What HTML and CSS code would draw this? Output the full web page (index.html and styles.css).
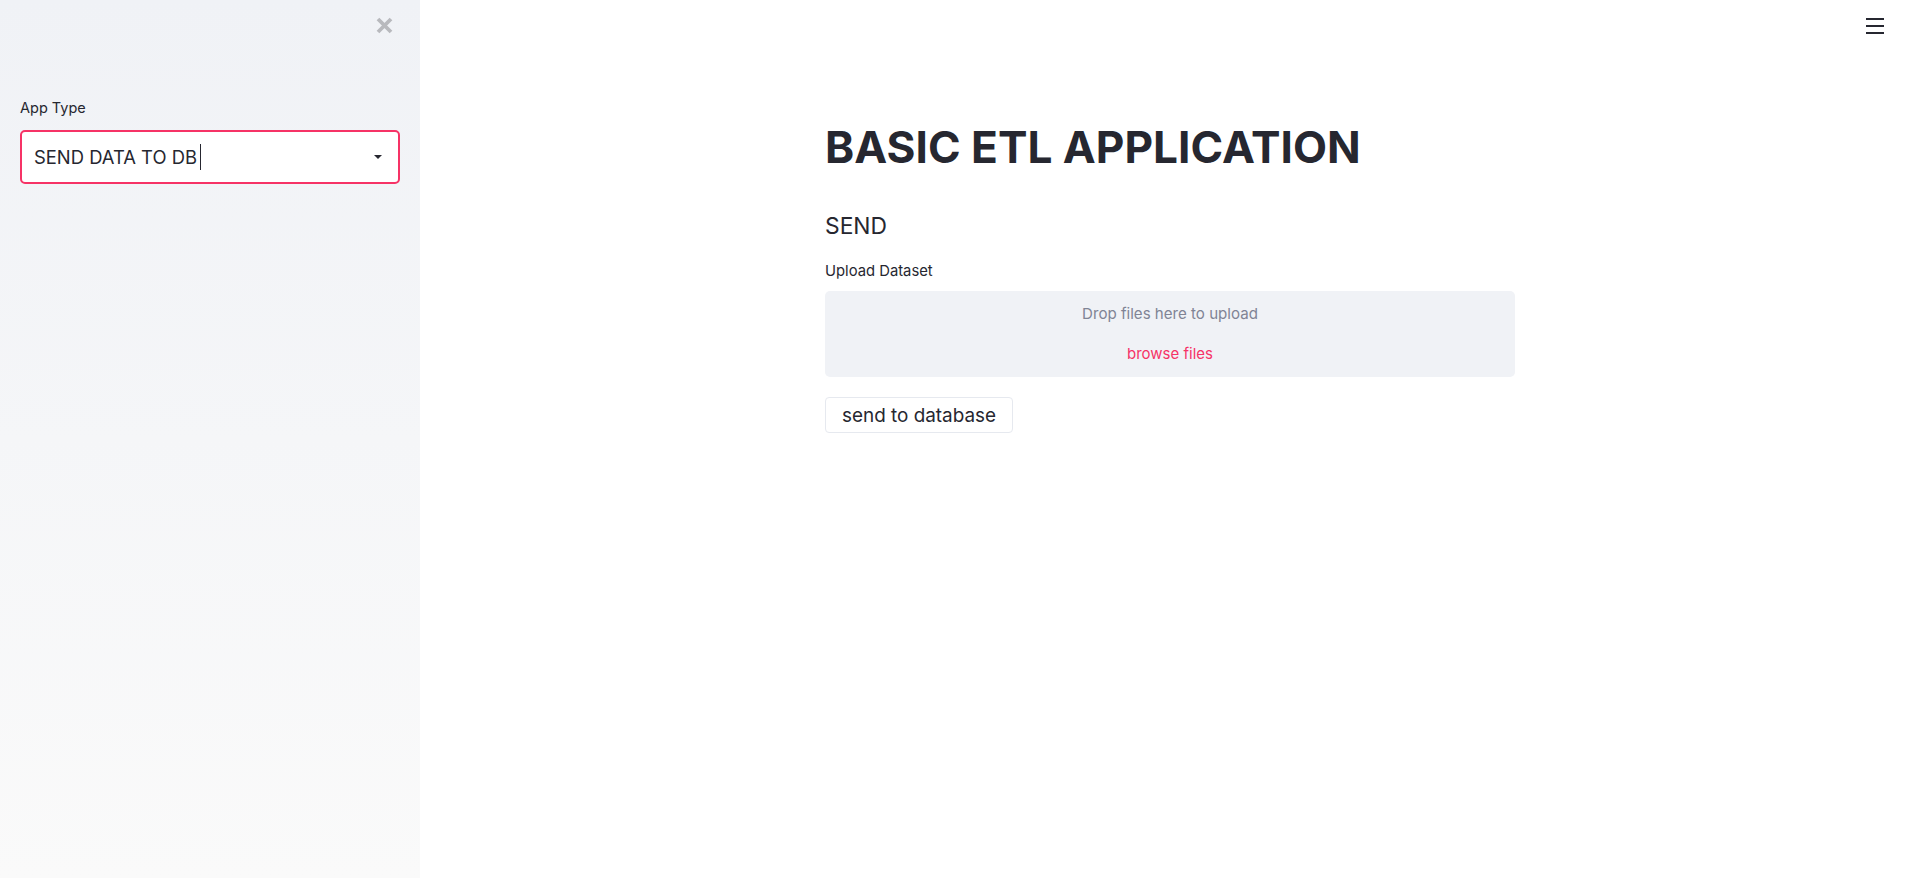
FILE: index.html
```html
<!DOCTYPE html>
<html lang="en">
<head>
<meta charset="utf-8">
<title>BASIC ETL APPLICATION</title>
<link rel="stylesheet" href="styles.css">
</head>
<body>
<div class="app">
  <aside class="sidebar">
    <div class="sidebar-top">
      <button class="close-btn" aria-label="Close sidebar">
        <svg width="17" height="17" viewBox="0 0 17 17"><path d="M2 2L15 15M15 2L2 15" stroke="currentColor" stroke-width="3.8" stroke-linecap="butt"/></svg>
      </button>
    </div>
    <label class="field-label">App Type</label>
    <div class="select">
      <span class="select-value">SEND DATA TO DB</span><span class="caret-cursor"></span>
      <svg class="select-arrow" width="8" height="4" viewBox="0 0 8 4"><path d="M0 0H8L4 4Z" fill="#262730"/></svg>
    </div>
  </aside>
  <main class="main">
    <button class="menu-btn" aria-label="Menu">
      <span></span><span></span><span></span>
    </button>
    <div class="block">
      <h1 class="title">BASIC ETL APPLICATION</h1>
      <h3 class="subheader">SEND</h3>
      <div class="upload-label">Upload Dataset</div>
      <div class="dropzone">
        <div class="drop-text">Drop files here to upload</div>
        <div class="browse">browse files</div>
      </div>
      <button class="btn">send to database</button>
    </div>
  </main>
</div>
</body>
</html>
```
FILE: styles.css
```css
* { box-sizing: border-box; }
html, body { margin: 0; padding: 0; height: 100%; }
body { font-family: "Inter", "Open Sans", sans-serif; color: #262730; background: #fff; overflow: hidden; }
.app { display: flex; height: 878px; }

.sidebar { width: 420px; flex: none; background: linear-gradient(180deg, #f0f2f6 0%, #fafafa 100%); padding: 0 20px; }
.sidebar-top { height: 98px; display: flex; justify-content: flex-end; align-items: flex-start; padding-top: 17px; }
.close-btn { border: 0; background: none; padding: 0; margin-right: 7px; color: #b8b9bd; width: 17px; height: 17px; display: block; }
.close-btn svg { display: block; }
.field-label { display: block; font-size: 14.5px; line-height: 20px; color: #262730; margin-bottom: 12px; }
.select { height: 54px; border: 2px solid #f63366; border-radius: 5px; background: #fff; display: flex; align-items: center; padding: 0 16px 0 12px; }
.select-value { font-size: 18.4px; color: #262730; }
.caret-cursor { width: 1px; height: 26px; background: #262730; margin-left: 3px; }
.select-arrow { margin-left: auto; }

.main { flex: 1; position: relative; display: flex; justify-content: center; padding-left: 9px; }
.menu-btn { position: absolute; top: 18px; right: 27px; width: 18px; height: 16px; border: 0; background: none; padding: 0; display: flex; flex-direction: column; justify-content: space-between; }
.menu-btn span { display: block; height: 2px; background: #262730; }
.block { width: 690px; padding-top: 121px; }
.title { margin: 0; font-size: 44.2px; line-height: 52px; font-weight: 700; color: #262730; }
.subheader { margin: 37px 0 0; font-size: 22.8px; line-height: 32px; font-weight: 400; }
.upload-label { font-size: 14.8px; line-height: 20px; margin-top: 19px; }
.dropzone { margin-top: 10px; height: 86px; background: #f0f2f6; border-radius: 5px; display: flex; flex-direction: column; align-items: center; padding-top: 13px; }
.drop-text { font-size: 15.1px; line-height: 20px; color: #808495; }
.browse { font-size: 15px; line-height: 20px; color: #f63366; margin-top: 20px; }
.btn { display: block; margin-top: 20px; height: 36px; padding: 0 16px; border: 1px solid #e6e9ef; border-radius: 4px; background: #fff; font-family: inherit; font-size: 18.9px; color: #262730; }
```
